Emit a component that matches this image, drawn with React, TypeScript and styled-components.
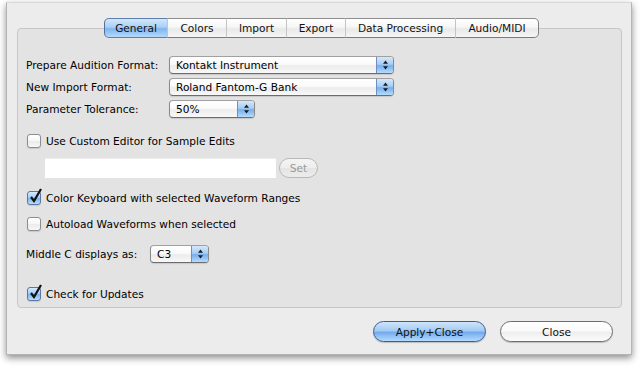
import React from "react";
import styled, { createGlobalStyle } from "styled-components";

const Global = createGlobalStyle`
  html, body { margin: 0; padding: 0; background: #ffffff; }
  body { font-family: "DejaVu Sans", "Liberation Sans", sans-serif; font-size: 10.6px; color: #000; }
`;

const Page = styled.div`
  width: 640px;
  height: 366px;
  padding: 2px 0 0 6px;
  box-sizing: border-box;
`;

const Window = styled.div`
  width: 626px;
  height: 353px;
  box-sizing: border-box;
  background: #ececec;
  border: 1px solid #b4b4b4;
  border-top-color: #d8d8d8;
  box-shadow: 0 3px 7px rgba(0, 0, 0, 0.45);
  padding: 15px 9px 0 10px;
  display: flex;
  flex-direction: column;
`;

const TabBar = styled.div`
  display: flex;
  margin-left: 87px;
  height: 20px;
  position: relative;
  z-index: 1;
  margin-bottom: -10px;
`;

const Tab = styled.div<{ $w: number; $active?: boolean; $first?: boolean; $last?: boolean }>`
  width: ${(p) => p.$w}px;
  height: 20px;
  box-sizing: border-box;
  display: flex;
  align-items: center;
  justify-content: center;
  font-size: 10.6px;
  color: #111;
  border-top: 1px solid #8e8e8e;
  border-bottom: 1px solid #7a7a7a;
  border-left: ${(p) => (p.$first ? "1px solid #7f7f7f" : "1px solid #c4c4c4")};
  border-right: ${(p) => (p.$last ? "1px solid #7f7f7f" : "none")};
  border-radius: ${(p) => (p.$first ? "5px 0 0 5px" : p.$last ? "0 5px 5px 0" : "0")};
  background: ${(p) =>
    p.$active
      ? "linear-gradient(#d3e7fb 0%, #a9d0f6 45%, #7fb5ef 55%, #b3dafc 100%)"
      : "linear-gradient(#ffffff 0%, #f6f6f6 45%, #e9e9e9 55%, #f6f6f6 100%)"};
  ${(p) => (p.$active ? "border-color: #5d7fb0; border-left-color: #4f6f9e;" : "")}
`;

const Group = styled.div`
  height: 280px;
  box-sizing: border-box;
  border: 1px solid #c6c6c6;
  border-radius: 4px;
  background: #e3e3e3;
  padding: 18px 8px 0 8px;
  display: flex;
  flex-direction: column;
`;

const FormRow = styled.div<{ $mt?: number }>`
  display: flex;
  align-items: center;
  height: 18px;
  margin-top: ${(p) => p.$mt ?? 0}px;
`;

const Label = styled.div<{ $w: number }>`
  width: ${(p) => p.$w}px;
  flex: none;
  white-space: nowrap;
`;

const Popup = styled.div<{ $w: number }>`
  width: ${(p) => p.$w}px;
  height: 18px;
  box-sizing: border-box;
  border: 1px solid #8a8a8a;
  border-top-color: #a0a0a0;
  border-bottom-color: #6c6c6c;
  border-radius: 4px;
  display: flex;
  overflow: hidden;
  background: linear-gradient(#ffffff 0%, #fafafa 45%, #ececec 55%, #f8f8f8 100%);
  box-shadow: 0 1px 1px rgba(0, 0, 0, 0.12);
`;

const PopupText = styled.div`
  flex: 1;
  padding-left: 6px;
  display: flex;
  align-items: center;
  white-space: nowrap;
`;

const PopupArrows = styled.div`
  width: 16px;
  flex: none;
  border-left: 1px solid #6f8fc0;
  background: linear-gradient(#d4e8fc 0%, #a7cdf5 45%, #76aeee 55%, #b6dcfd 100%);
  display: flex;
  align-items: center;
  justify-content: center;
`;

const Arrows = () => (
  <svg width="7" height="10" viewBox="0 0 7 10">
    <path d="M3.5 0.5 L6 3.8 L1 3.8 Z" fill="#1a1a1a" />
    <path d="M3.5 9.5 L6 6.2 L1 6.2 Z" fill="#1a1a1a" />
  </svg>
);

const Select = ({ w, value }: { w: number; value: string }) => (
  <Popup $w={w}>
    <PopupText>{value}</PopupText>
    <PopupArrows>
      <Arrows />
    </PopupArrows>
  </Popup>
);

const CheckRow = styled.div<{ $mt: number }>`
  display: flex;
  align-items: center;
  height: 16px;
  margin-top: ${(p) => p.$mt}px;
  margin-left: 1px;
  gap: 5px;
  white-space: nowrap;
`;

const Box = styled.div<{ $on?: boolean }>`
  width: 14px;
  height: 14px;
  box-sizing: border-box;
  border: 1px solid ${(p) => (p.$on ? "#5a76a3" : "#8c8c8c")};
  border-radius: 3px;
  position: relative;
  background: ${(p) =>
    p.$on
      ? "linear-gradient(#d6eafd 0%, #a8cef6 45%, #7db4ef 55%, #bde0fd 100%)"
      : "linear-gradient(#ffffff 0%, #f7f7f7 45%, #ebebeb 55%, #f7f7f7 100%)"};
  box-shadow: 0 1px 1px rgba(0, 0, 0, 0.12);
`;

const Tick = styled.svg`
  position: absolute;
  left: 1px;
  top: -4px;
`;

const Check = ({ on, text, mt }: { on?: boolean; text: string; mt: number }) => (
  <CheckRow $mt={mt}>
    <Box $on={on}>
      {on && (
        <Tick width="14" height="16" viewBox="0 0 14 16">
          <path d="M2 9 L5 13 L12 1" stroke="#111" strokeWidth="2.2" fill="none" strokeLinejoin="miter" />
        </Tick>
      )}
    </Box>
    <span>{text}</span>
  </CheckRow>
);

const FieldRow = styled.div`
  display: flex;
  align-items: center;
  margin-top: 9px;
  margin-left: 19px;
  gap: 3px;
  height: 20px;
`;

const TextField = styled.div`
  width: 231px;
  height: 19px;
  background: #ffffff;
  border-top: 1px solid #ededed;
`;

const SetButton = styled.div`
  width: 39px;
  height: 20px;
  box-sizing: border-box;
  border: 1px solid #b8b8b8;
  border-radius: 10px;
  display: flex;
  align-items: center;
  justify-content: center;
  color: #9a9a9a;
  background: linear-gradient(#f4f4f4 0%, #ededed 50%, #e4e4e4 51%, #ececec 100%);
`;

const Footer = styled.div`
  display: flex;
  justify-content: flex-end;
  gap: 14px;
  margin-top: 13px;
  padding-right: 9px;
`;

const PushButton = styled.div<{ $primary?: boolean }>`
  width: 113px;
  height: 21px;
  box-sizing: border-box;
  border-radius: 11px;
  border: 1px solid ${(p) => (p.$primary ? "#3d5c93" : "#6e6e6e")};
  display: flex;
  align-items: center;
  justify-content: center;
  color: #111;
  background: ${(p) =>
    p.$primary
      ? "linear-gradient(#cfe5fb 0%, #a3cbf4 45%, #74abec 55%, #b4dafd 100%)"
      : "linear-gradient(#ffffff 0%, #fafafa 45%, #eeeeee 55%, #fbfbfb 100%)"};
  box-shadow: 0 1px 1px rgba(0, 0, 0, 0.2);
`;

const tabs: { name: string; w: number }[] = [
  { name: "General", w: 63 },
  { name: "Colors", w: 59 },
  { name: "Import", w: 60 },
  { name: "Export", w: 59 },
  { name: "Data Processing", w: 110 },
  { name: "Audio/MIDI", w: 84 },
];

export default function App() {
  return (
    <Page>
      <Global />
      <Window>
        <TabBar>
          {tabs.map((t, i) => (
            <Tab key={t.name} $w={t.w} $active={i === 0} $first={i === 0} $last={i === tabs.length - 1}>
              {t.name}
            </Tab>
          ))}
        </TabBar>
        <Group>
          <FormRow $mt={9}>
            <Label $w={143}>Prepare Audition Format:</Label>
            <Select w={225} value="Kontakt Instrument" />
          </FormRow>
          <FormRow $mt={4}>
            <Label $w={143}>New Import Format:</Label>
            <Select w={225} value="Roland Fantom-G Bank" />
          </FormRow>
          <FormRow $mt={4}>
            <Label $w={143}>Parameter Tolerance:</Label>
            <Select w={86} value="50%" />
          </FormRow>
          <Check text="Use Custom Editor for Sample Edits" mt={15} />
          <FieldRow>
            <TextField />
            <SetButton>Set</SetButton>
          </FieldRow>
          <Check on text="Color Keyboard with selected Waveform Ranges" mt={12} />
          <Check text="Autoload Waveforms when selected" mt={10} />
          <FormRow $mt={13}>
            <Label $w={124}>Middle C displays as:</Label>
            <Select w={59} value="C3" />
          </FormRow>
          <Check on text="Check for Updates" mt={23} />
        </Group>
        <Footer>
          <PushButton $primary>Apply+Close</PushButton>
          <PushButton>Close</PushButton>
        </Footer>
      </Window>
    </Page>
  );
}
